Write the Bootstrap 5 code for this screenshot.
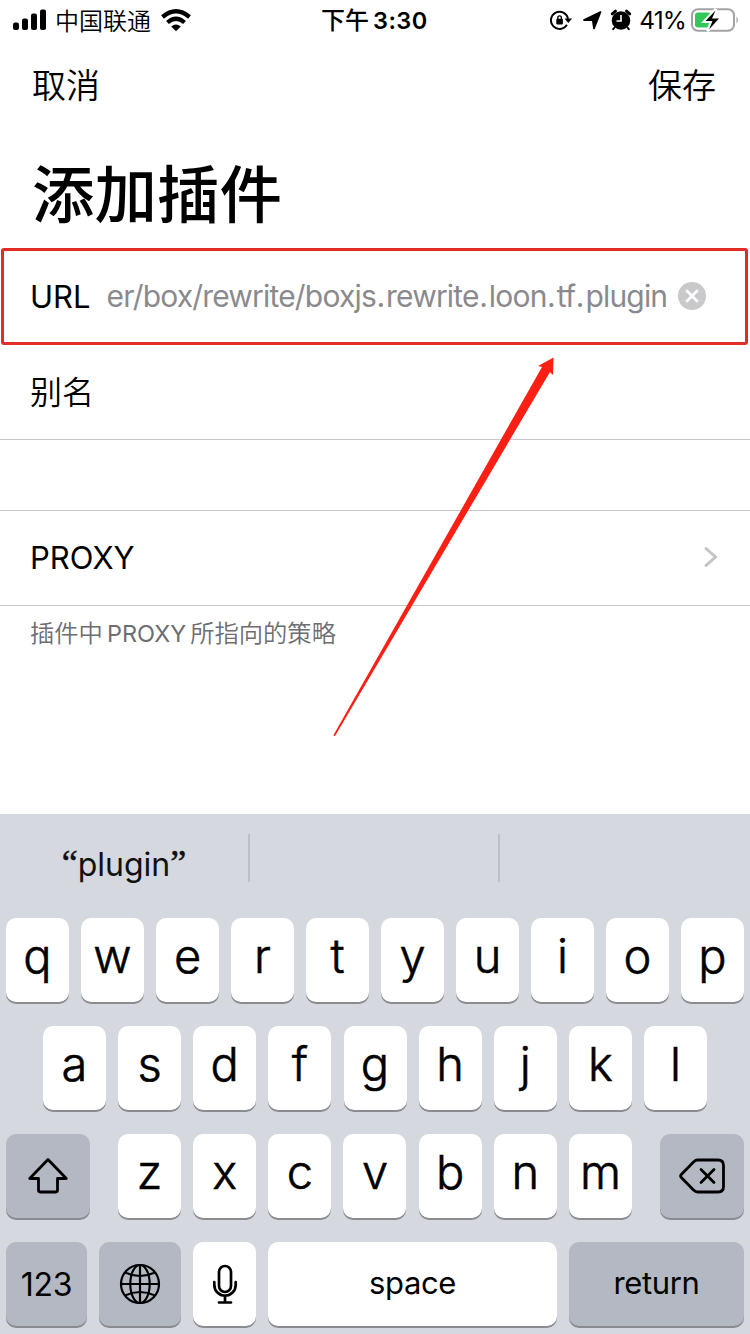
<!DOCTYPE html>
<html lang="zh-CN">
<head>
<meta charset="utf-8">
<meta name="viewport" content="width=device-width, initial-scale=1">
<title>添加插件</title>
<link href="https://cdn.jsdelivr.net/npm/bootstrap@5.3.0/dist/css/bootstrap.min.css" rel="stylesheet">
<style>
body{font-family:Inter,"Noto Sans CJK SC",sans-serif;color:#000;background:#fff;width:750px;height:1334px;overflow:hidden}
svg{display:block;flex:none}
.screen{height:1334px}
.status{height:40px;padding:0 10px 0 13px;font-size:24px;line-height:40px}
.status .carrier{font-weight:350;padding-top:3px}
.status .pct{font-weight:400;font-size:24.5px;letter-spacing:-.9px;margin-left:7px}
.status .clock{left:321px;top:0;font-weight:600;font-size:23.5px;letter-spacing:.45px;line-height:41px}
.status .clock span{font-weight:500;font-size:24px;letter-spacing:0;margin-right:4px}
.topbar{height:90px;padding:0 34px 0 32px;font-size:34px;line-height:91px;font-weight:350}
.topbar a{color:#000}
.page-title{height:118px;margin:0;padding-left:32px;font-size:62.5px;line-height:130px;font-weight:500}
.field{border-bottom:1px solid #c6c6c8;padding:0 31px 0 30px;font-size:31px;height:95px;line-height:94px;font-weight:400}
.field.alias{font-size:32px;line-height:96px;font-weight:350}
.field.active{border:3px solid #e12d25;border-radius:3px;height:97px;line-height:91px;margin:0 2px 0 1px;padding:0 39px 0 26px}
.field .val{color:#8a8a8e;font-size:30px;margin-left:16px;letter-spacing:-.82px;padding-bottom:1px}
.field .val b{font-weight:400;letter-spacing:1px;margin-left:.5px}
.field svg{margin-bottom:2px}
.blank{height:71px;border-bottom:1px solid #c6c6c8}
.hint{padding-left:30px;font-size:24.3px;line-height:54px;color:#6d6d72;height:208px;font-weight:350}
.hint .lat{margin:0 4px;font-size:23.5px;font-weight:400}
.keyboard{background:#d5d8de;height:520px;padding:0 6px}
.suggest{height:104px;line-height:101px;font-size:32px;font-weight:400;color:#111}
.suggest .word{width:242px;padding-right:6px}
.suggest .quote{font-family:"Liberation Serif",serif;font-size:36px;position:relative;top:-1px;-webkit-text-stroke:.5px #111}
.suggest i{width:2px;height:48px;background:#bcc0c6;margin-top:20px}
.suggest .gap-cell{width:248px}
.keys{height:84px;margin-bottom:24px}
.key{height:84px;width:63px;border-radius:10px;background:#fff;box-shadow:0 2px 0 #898b90;font-size:47px;font-weight:300;-webkit-text-stroke:.6px #000;line-height:76px;text-align:center;flex:none}
.key.dark{background:#b3b8c2}
.key.word-key{font-size:31px;font-weight:400;-webkit-text-stroke:0;line-height:82px;letter-spacing:-.4px}
.key.num-key{line-height:85px;font-size:32px;letter-spacing:-.3px}
.keys.mid{padding:0 37px;justify-content:space-between}
.arrow{left:0;top:0;pointer-events:none}
</style>
</head>
<body>
<main class="screen position-relative d-flex flex-column">
  <header class="status d-flex align-items-center position-relative">
    <svg width="34" height="22" viewBox="0 0 34 22"><rect x="0" y="13.5" width="6" height="7.5" rx="2"/><rect x="9" y="9.5" width="6" height="11.5" rx="2"/><rect x="18" y="4.500" width="6" height="16.500" rx="2"/><rect x="27" y="0.500" width="6" height="20.500" rx="2"/></svg>
    <span style="margin-left:8px" class="carrier">中国联通</span>
    <svg class="ms-2" width="34" height="24" viewBox="0 0 34 24" fill="none" stroke="#000" stroke-width="4.300"><path d="M3.500 9Q17-2.500 30.500 9"/><path d="M8.500 14.500Q17 7 25.500 14.500"/><path d="M12.200 18.500Q17 14.500 21.800 18.500L17 23.200Z" fill="#000" stroke="none"/></svg>
    <div class="clock position-absolute"><span>下午</span>3:30</div>
    <svg class="ms-auto" width="22" height="22" viewBox="0 0 22 22"><path d="M16.900 15.800A8.600 8.600 0 1 1 18 9.800" fill="none" stroke="#000" stroke-width="2"/><path d="M14.500 9.500h7.500l-3.700 4.500z"/><rect x="6.300" y="9.800" width="6.600" height="5.700" rx="1"/><path d="M7.800 10V8.700a1.800 1.800 0 0 1 3.600 0V10" fill="none" stroke="#000" stroke-width="1.400"/></svg>
    <svg style="margin-left:10px" width="20" height="20" viewBox="0 0 20 20"><path d="M18.500 2 12 18.300 10.800 10 2 10Z" stroke="#000" stroke-width="1.800" stroke-linejoin="round"/></svg>
    <svg style="margin-left:8px" width="22" height="22" viewBox="0 0 22 22"><circle cx="11" cy="11.500" r="9.300"/><path d="M2.300 4.800 5.500 2.200M16.500 2.200l3.200 2.600" stroke="#000" stroke-width="3" stroke-linecap="round"/><path d="M4.500 18.500l-1.300 1.700M17.500 18.500l1.300 1.700" stroke="#000" stroke-width="2" stroke-linecap="round"/><path d="M11 6v6H6.500" fill="none" stroke="#fff" stroke-width="1.600"/></svg>
    <span class="pct">41%</span>
    <svg style="margin-left:5px" width="49" height="24" viewBox="0 0 49 24"><rect x="1" y="1.200" width="42" height="21.500" rx="6" fill="#fff" stroke="#a3a3a5" stroke-width="2"/><path d="M45.500 8.500q3 3.500 0 7z" fill="#a3a3a5"/><rect x="4" y="4.500" width="16" height="15" rx="3" fill="#34c759"/><path d="M25 1 13.500 13.500h7L16.500 23 29 10h-7.500z" fill="#fff" stroke="#fff" stroke-width="3"/><path d="M24.500 2.500 14.500 13h7L18 21.500 28 10.500h-7z"/></svg>
  </header>
  <nav class="topbar d-flex justify-content-between"><a class="text-decoration-none">取消</a><a class="text-decoration-none">保存</a></nav>
  <h1 class="page-title">添加插件</h1>
  <section>
    <div class="field active d-flex align-items-center"><span>URL</span><span class="val">er/box/rewrite/boxjs<b>.</b>rewrite<b>.</b>loon<b>.</b>tf<b>.</b>plugin</span>
      <svg class="ms-auto" width="28" height="28" viewBox="0 0 28 28"><circle cx="14" cy="14" r="14" fill="#c9c9cb"/><path d="m9 9 10 10M19 9 9 19" stroke="#fff" stroke-width="2.800" stroke-linecap="round"/></svg></div>
    <div class="field alias">别名</div>
    <div class="blank"></div>
    <div class="field d-flex align-items-center justify-content-between"><span>PROXY</span>
      <svg width="17" height="24" viewBox="0 0 17 24"><path d="M4 3.500 13.500 12 4 20.500" fill="none" stroke="#c4c4c6" stroke-width="3" stroke-linecap="round"/></svg></div>
    <div class="hint"><span>插件中</span><span class="lat">PROXY</span><span>所指向的策略</span></div>
  </section>
  <section class="keyboard">
    <div class="suggest d-flex"><div class="word text-center"><span class="quote">“</span>plugin<span class="quote">”</span></div><i></i><div class="gap-cell"></div><i></i></div>
    <div class="keys d-flex justify-content-between"><div class="key">q</div><div class="key">w</div><div class="key">e</div><div class="key">r</div><div class="key">t</div><div class="key">y</div><div class="key">u</div><div class="key">i</div><div class="key">o</div><div class="key">p</div></div>
    <div class="keys mid d-flex"><div class="key">a</div><div class="key">s</div><div class="key">d</div><div class="key">f</div><div class="key">g</div><div class="key">h</div><div class="key">j</div><div class="key">k</div><div class="key">l</div></div>
    <div class="keys d-flex justify-content-between">
      <div class="key dark d-flex align-items-center justify-content-center" style="width:84px"><svg width="42" height="38" viewBox="0 0 42 38" fill="none" stroke="#000" stroke-width="2.800" stroke-linejoin="round"><path d="M21 2.500 39.300 21.500H30.500V33q0 2-2 2h-15q-2 0-2-2V21.500H2.700Z"/></svg></div>
      <div class="d-flex justify-content-between" style="width:514px"><div class="key">z</div><div class="key">x</div><div class="key">c</div><div class="key">v</div><div class="key">b</div><div class="key">n</div><div class="key">m</div></div>
      <div class="key dark d-flex align-items-center justify-content-center" style="width:84px"><svg width="46" height="36" viewBox="0 0 46 36" fill="none" stroke="#000" stroke-width="2.800" stroke-linejoin="round" stroke-linecap="round"><path d="M18.500 2H39q5.500 0 5.500 5.500v21Q44.500 34 39 34H18.500q-2 0-3.500-1.600L2.300 19.500q-1.300-1.500 0-3L15 3.600Q16.500 2 18.500 2Z"/><path d="m22 11.500 13 13M35 11.500l-13 13"/></svg></div>
    </div>
    <div class="keys d-flex justify-content-between">
      <div class="key dark word-key num-key" style="width:81px">123</div>
      <div class="key dark d-flex align-items-center justify-content-center" style="width:82px"><svg width="42" height="42" viewBox="0 0 42 42" fill="none" stroke="#000" stroke-width="2.200"><circle cx="21" cy="21" r="19"/><ellipse cx="21" cy="21" rx="9.700" ry="19"/><path d="M21 2v38M2 21h38M6 9.500Q21 16.500 36 9.500M6 32.500Q21 25.500 36 32.500"/></svg></div>
      <div class="key d-flex align-items-center justify-content-center"><svg width="26" height="42" viewBox="0 0 26 42" fill="none" stroke="#000" stroke-width="2.700" stroke-linecap="round"><rect x="7" y="3" width="12" height="26" rx="6"/><path d="M2.300 19v3a10.700 10.700 0 0 0 21.400 0v-3M13 33v6M7 39.500h12"/></svg></div>
      <div class="key word-key" style="width:289px">space</div>
      <div class="key dark word-key" style="width:175px">return</div>
    </div>
  </section>
  <svg class="arrow position-absolute" width="750" height="760" viewBox="0 0 750 760"><path d="M333.300 735.500 542 367 538 366 553.500 357.500 553 375 550 372 335 736Z" fill="#fb2013"/></svg>
</main>
<script src="https://cdn.jsdelivr.net/npm/bootstrap@5.3.0/dist/js/bootstrap.bundle.min.js"></script>
</body>
</html>
